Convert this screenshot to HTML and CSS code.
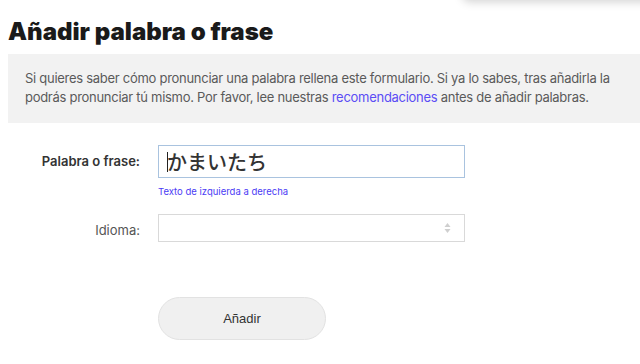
FILE: index.html
```html
<!DOCTYPE html>
<html lang="es">

<head>
    <meta charset="UTF-8">
    <meta name="viewport" content="width=device-width, initial-scale=1.0">
    <title>Añadir palabra o frase</title>
    <link rel="stylesheet" href="styles.css">
</head>

<body>
    <div class="menu-shadow"></div>

    <h1 class="title">Añadir palabra o frase</h1>

    <div class="intro">
        Si quieres saber cómo pronunciar una palabra rellena este formulario. Si ya lo sabes, tras añadirla la<br>
        podrás pronunciar tú mismo. Por favor, lee nuestras <a href="#">recomendaciones</a> antes de añadir palabras.
    </div>

    <form class="add-form">
        <div class="row">
            <label class="label strong" for="word">Palabra o frase:</label>
            <div class="field">
                <div class="text-input"><span class="caret"></span>かまいたち</div>
                <div class="hint">Texto de izquierda a derecha</div>
            </div>
        </div>

        <div class="row">
            <label class="label" for="lang">Idioma:</label>
            <div class="field">
                <div class="select">
                    <span class="arrows">
                        <svg width="7" height="12" viewBox="0 0 7 12">
                            <path d="M3.5 1 L6.5 5 L0.5 5 Z" fill="#cfcfcf" />
                            <path d="M3.5 11 L6.5 7 L0.5 7 Z" fill="#cfcfcf" />
                        </svg>
                    </span>
                </div>
            </div>
        </div>

        <div class="row submit-row">
            <div class="label"></div>
            <button type="button" class="btn">Añadir</button>
        </div>
    </form>
</body>

</html>
```

FILE: styles.css
```css
body {
    margin: 0;
    padding: 0 0 0 8px;
    font-family: Inter, "Liberation Sans", sans-serif;
    color: #333;
    background: #fff;
}

.menu-shadow {
    position: absolute;
    top: -40px;
    left: 462px;
    width: 200px;
    height: 40px;
    background: #fff;
    box-shadow: 0 2px 10px rgba(0, 0, 0, 0.18);
    border-radius: 0 0 0 8px;
}

.title {
    margin: 0;
    padding-top: 18px;
    font-size: 24px;
    font-weight: 900;
    letter-spacing: 0;
    line-height: 28px;
    color: #1a1a1a;
}

.intro {
    margin-top: 8px;
    background: #f2f2f2;
    padding: 15px 17px 16px 17px;
    font-size: 13px;
    line-height: 19px;
    color: #5a5a5a;
    letter-spacing: -0.28px;
}

.intro a {
    color: #5b4df5;
    text-decoration: none;
}

.add-form {
    margin-top: 22px;
}

.row {
    display: flex;
    gap: 18px;
    margin-bottom: 17px;
}

.label {
    width: 132px;
    flex: none;
    text-align: right;
    font-size: 13px;
    color: #555;
    padding-top: 8px;
}

.label.strong {
    font-weight: 600;
    color: #333;
}

.field {
    width: 307px;
}

.text-input {
    box-sizing: border-box;
    height: 33px;
    border: 1px solid #a9c3df;
    padding: 0 8px;
    font-family: "Noto Sans CJK JP", sans-serif;
    font-size: 20px;
    font-weight: 500;
    line-height: 31px;
    color: #333;
    position: relative;
}

.caret {
    position: absolute;
    left: 8px;
    top: 6px;
    width: 1px;
    height: 20px;
    background: #222;
}

.hint {
    margin-top: 8px;
    font-size: 9.5px;
    color: #4b3cf5;
}

.select {
    box-sizing: border-box;
    height: 28px;
    border: 1px solid #d9d9d9;
    display: flex;
    justify-content: flex-end;
    align-items: center;
    padding-right: 13px;
}

.arrows svg {
    display: block;
}

.submit-row {
    margin-top: 55px;
}

.btn {
    width: 168px;
    height: 43px;
    border: 1px solid #e2e2e2;
    border-radius: 22px;
    background: #f0f0f0;
    font-family: "Liberation Sans", Arial, sans-serif;
    font-size: 13px;
    color: #333;
}
```
